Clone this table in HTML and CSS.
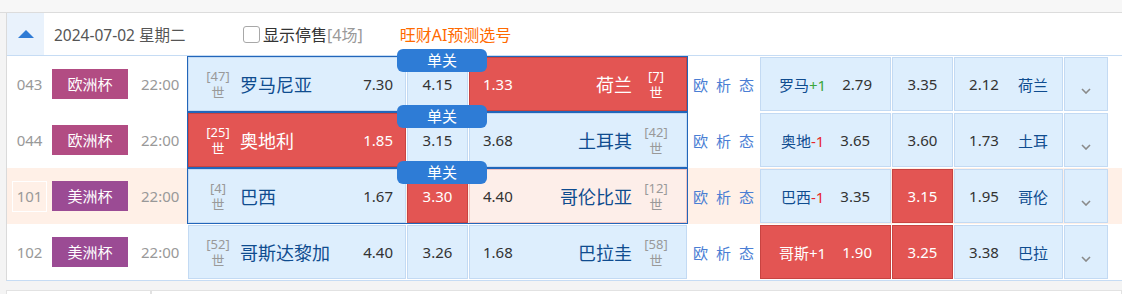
FILE: index.html
```html
<!DOCTYPE html>
<html lang="zh">
<head>
<meta charset="utf-8">
<title>赛事列表</title>
<link rel="stylesheet" href="styles.css">
</head>
<body>
<div class="topbar"></div>
<div class="board">
  <div class="head">
    <div class="toggle"><span class="tri"></span></div>
    <div class="date">2024-07-02 星期二</div>
    <label class="stop"><span class="cb"></span>显示停售<span class="cnt">[4场]</span></label>
    <a class="ai">旺财AI预测选号</a>
  </div>

  <div class="row">
    <div class="num"><span>043</span></div>
    <div class="lg euro">欧洲杯</div>
    <div class="time">22:00</div>
    <div class="bet single">
      <span class="tab">单关</span>
      <div class="cell home"><div class="rank"><i>[47]</i><i>世</i></div><div class="team">罗马尼亚</div><div class="odd">7.30</div></div>
      <div class="cell draw"><span class="odd">4.15</span></div>
      <div class="cell away red"><div class="odd">1.33</div><div class="team">荷兰</div><div class="rank"><i>[7]</i><i>世</i></div></div>
    </div>
    <div class="links"><span>欧</span><span>析</span><span>态</span></div>
    <div class="hcp">
      <div class="cell h1"><span class="team">罗马<em class="up">+1</em></span><span class="odd">2.79</span></div>
      <div class="cell h2"><span class="odd">3.35</span></div>
      <div class="cell h3"><span class="odd">2.12</span><span class="team">荷兰</span></div>
      <div class="cell more"><svg width="10" height="6" viewBox="0 0 10 6"><path d="M1 1 L5 5 L9 1" fill="none" stroke="#8a8a8a" stroke-width="1.6"/></svg></div>
    </div>
  </div>

  <div class="row">
    <div class="num"><span>044</span></div>
    <div class="lg euro">欧洲杯</div>
    <div class="time">22:00</div>
    <div class="bet single">
      <span class="tab">单关</span>
      <div class="cell home red"><div class="rank"><i>[25]</i><i>世</i></div><div class="team">奥地利</div><div class="odd">1.85</div></div>
      <div class="cell draw"><span class="odd">3.15</span></div>
      <div class="cell away"><div class="odd">3.68</div><div class="team">土耳其</div><div class="rank"><i>[42]</i><i>世</i></div></div>
    </div>
    <div class="links"><span>欧</span><span>析</span><span>态</span></div>
    <div class="hcp">
      <div class="cell h1"><span class="team">奥地<em class="dn">-1</em></span><span class="odd">3.65</span></div>
      <div class="cell h2"><span class="odd">3.60</span></div>
      <div class="cell h3"><span class="odd">1.73</span><span class="team">土耳</span></div>
      <div class="cell more"><svg width="10" height="6" viewBox="0 0 10 6"><path d="M1 1 L5 5 L9 1" fill="none" stroke="#8a8a8a" stroke-width="1.6"/></svg></div>
    </div>
  </div>

  <div class="row hover">
    <div class="num"><span>101</span></div>
    <div class="lg copa">美洲杯</div>
    <div class="time">22:00</div>
    <div class="bet single">
      <span class="tab">单关</span>
      <div class="cell home"><div class="rank"><i>[4]</i><i>世</i></div><div class="team">巴西</div><div class="odd">1.67</div></div>
      <div class="cell draw red"><span class="odd">3.30</span></div>
      <div class="cell away pink"><div class="odd">4.40</div><div class="team">哥伦比亚</div><div class="rank"><i>[12]</i><i>世</i></div></div>
    </div>
    <div class="links"><span>欧</span><span>析</span><span>态</span></div>
    <div class="hcp">
      <div class="cell h1"><span class="team">巴西<em class="dn">-1</em></span><span class="odd">3.35</span></div>
      <div class="cell h2 red"><span class="odd">3.15</span></div>
      <div class="cell h3"><span class="odd">1.95</span><span class="team">哥伦</span></div>
      <div class="cell more"><svg width="10" height="6" viewBox="0 0 10 6"><path d="M1 1 L5 5 L9 1" fill="none" stroke="#8a8a8a" stroke-width="1.6"/></svg></div>
    </div>
  </div>

  <div class="row">
    <div class="num"><span>102</span></div>
    <div class="lg copa">美洲杯</div>
    <div class="time">22:00</div>
    <div class="bet">
      <div class="cell home"><div class="rank"><i>[52]</i><i>世</i></div><div class="team">哥斯达黎加</div><div class="odd">4.40</div></div>
      <div class="cell draw"><span class="odd">3.26</span></div>
      <div class="cell away"><div class="odd">1.68</div><div class="team">巴拉圭</div><div class="rank"><i>[58]</i><i>世</i></div></div>
    </div>
    <div class="links"><span>欧</span><span>析</span><span>态</span></div>
    <div class="hcp">
      <div class="cell h1 red"><span class="team">哥斯<em>+1</em></span><span class="odd">1.90</span></div>
      <div class="cell h2 red"><span class="odd">3.25</span></div>
      <div class="cell h3"><span class="odd">3.38</span><span class="team">巴拉</span></div>
      <div class="cell more"><svg width="10" height="6" viewBox="0 0 10 6"><path d="M1 1 L5 5 L9 1" fill="none" stroke="#8a8a8a" stroke-width="1.6"/></svg></div>
    </div>
  </div>
</div>
<div class="next">
  <div class="nbox first"></div>
  <div class="nbox rest"></div>
</div>
</body>
</html>
```
FILE: styles.css
```css
* { box-sizing: border-box; margin: 0; padding: 0; }
html { overflow: hidden; }
body {
  width: 1122px;
  height: 294px;
  overflow: hidden;
  background: #f4f4f4;
  font-family: "Noto Sans", "Noto Sans CJK SC", sans-serif;
}
.topbar { height: 13px; background: #f7f7f7; border-bottom: 1px solid #dcdcdc; }
.board {
  margin-left: 6px;
  border-left: 1px solid #dadada;
  background: #fff;
  border-bottom: 1px solid #c6dcf4;
}
.head {
  display: flex;
  align-items: center;
  height: 43px;
  border-bottom: 1px solid #c6dcf4;
}
.toggle {
  width: 37px;
  height: 42px;
  background: #e9f2fc;
  display: flex;
  align-items: center;
  justify-content: center;
}
.tri {
  width: 0; height: 0;
  border-left: 8px solid transparent;
  border-right: 8px solid transparent;
  border-bottom: 8px solid #2f7bd5;
}
.date { margin-left: 10px; width: 189px; font-size: 15.5px; color: #555; }
.stop { display: flex; align-items: center; font-size: 16px; color: #333; }
.cb {
  width: 17px; height: 17px;
  border: 1px solid #a8a8a8;
  border-radius: 3px;
  background: #fff;
  margin-right: 3px;
}
.cnt { color: #999; }
.ai { margin-left: 37px; font-size: 16px; color: #ff6a00; }

.row { display: flex; align-items: center; height: 56px; }
.row.hover { background: #fff0e7; }
.num { width: 45px; text-align: center; font-size: 15px; color: #999; }
.num span { display: inline-block; width: 35px; height: 31px; line-height: 29px; border: 1px solid transparent; }
.hover .num span { border-color: #fff; }
.lg { width: 76px; height: 30px; line-height: 30px; text-align: center; color: #fff; font-size: 15px; }
.euro { background: #b24c83; }
.copa { background: #9b4b94; }
.time { width: 59px; padding-left: 13px; font-size: 15px; color: #999; }

.bet {
  position: relative;
  display: flex;
  width: 501px;
  height: 56px;
  border: 1px solid transparent;
}
.bet.single { border-color: #2266ba; }
.cell {
  height: 54px;
  border: 1px solid #c3daf3;
  background: #ddeefd;
  display: flex;
  align-items: center;
}
.home { width: 218px; margin-right: 1px; padding: 0 12px 0 16px; }
.draw { width: 61px; margin-right: 1px; justify-content: center; }
.away { width: 218px; padding: 0 17px 0 13px; }
.rank {
  width: 26px;
  display: flex;
  flex-direction: column;
  align-items: center;
  font-size: 13px;
  line-height: 16px;
  color: #999;
}
.rank i { font-style: normal; display: block; }
.team { font-size: 18px; color: #0f4c8f; }
.home .team { margin-left: 9px; flex: 1; }
.away .odd { flex: 1; }
.away .team { margin-right: 11px; }
.odd { font-size: 15px; color: #333; }
.cell.red { background: #e35553; border-color: #c84341; }
.red .team, .red .odd, .red .rank { color: #fff; }
.cell.pink { background: #fdeee9; border-color: #f2c3c0; }
.tab {
  position: absolute;
  left: 209px;
  top: -8px;
  width: 90px;
  height: 23px;
  border-radius: 6px;
  background: #2e7cd6;
  color: #fff;
  font-size: 15px;
  line-height: 22px;
  text-align: center;
  z-index: 2;
}

.links { width: 72px; padding-left: 5px; display: flex; gap: 8px; font-size: 15px; color: #4a7ed4; }

.hcp { display: flex; gap: 1px; }
.hcp .team { font-size: 15px; }
.hcp em { font-style: normal; }
.up { color: #3aa63a; }
.dn { color: #e8262a; }
.h1 { width: 131px; justify-content: center; gap: 16px; }
.h2 { width: 61px; justify-content: center; }
.h3 { width: 109px; justify-content: center; gap: 19px; }
.more { width: 44px; justify-content: center; padding-top: 14px; }

.next { display: flex; margin: 9px 0 0 6px; height: 4px; }
.nbox { background: #fff; border: 1px solid #e2e2e2; border-bottom: 0; height: 4px; }
.first { width: 145px; }
.rest { flex: 1; }
```
